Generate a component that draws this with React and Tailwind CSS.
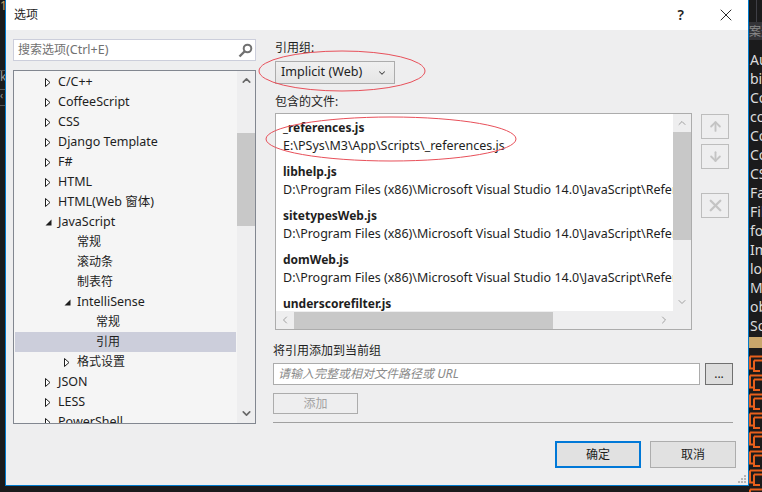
import { ChevronUp, ChevronDown, ChevronLeft, ChevronRight, ArrowUp, ArrowDown, X } from "lucide-react";

const font = "font-['Noto_Sans','Noto_Sans_CJK_SC',sans-serif]";

const treeRows = [
  { label: "C/C++", depth: 0, arrow: "closed", latin: true },
  { label: "CoffeeScript", depth: 0, arrow: "closed", latin: true },
  { label: "CSS", depth: 0, arrow: "closed", latin: true },
  { label: "Django Template", depth: 0, arrow: "closed", latin: true },
  { label: "F#", depth: 0, arrow: "closed", latin: true },
  { label: "HTML", depth: 0, arrow: "closed", latin: true },
  { label: "HTML(Web 窗体)", depth: 0, arrow: "closed", latin: true },
  { label: "JavaScript", depth: 0, arrow: "open", latin: true },
  { label: "常规", depth: 1 },
  { label: "滚动条", depth: 1 },
  { label: "制表符", depth: 1 },
  { label: "IntelliSense", depth: 1, arrow: "open", latin: true },
  { label: "常规", depth: 2 },
  { label: "引用", depth: 2, selected: true },
  { label: "格式设置", depth: 1, arrow: "closed" },
  { label: "JSON", depth: 0, arrow: "closed", latin: true },
  { label: "LESS", depth: 0, arrow: "closed", latin: true },
  { label: "PowerShell", depth: 0, arrow: "closed", latin: true },
];

const files = [
  { name: "_references.js", path: "E:\\PSys\\M3\\App\\Scripts\\_references.js" },
  { name: "libhelp.js", path: "D:\\Program Files (x86)\\Microsoft Visual Studio 14.0\\JavaScript\\References\\libhelp.js" },
  { name: "sitetypesWeb.js", path: "D:\\Program Files (x86)\\Microsoft Visual Studio 14.0\\JavaScript\\References\\sitetypesWeb.js" },
  { name: "domWeb.js", path: "D:\\Program Files (x86)\\Microsoft Visual Studio 14.0\\JavaScript\\References\\domWeb.js" },
  { name: "underscorefilter.js", path: "" },
];

const backdrop = ["Au", "bi", "Co", "co", "Co", "Co", "CS", "Fa", "Fil", "fo", "Im", "lo", "M", "ob", "So"];

function Arrow({ type }) {
  if (type === "open") {
    return (
      <svg width="7" height="7" viewBox="0 0 7 7" className="shrink-0">
        <path d="M6.5 0.5V6.5H0.5Z" fill="#1e1e1e" />
      </svg>
    );
  }
  return (
    <svg width="6" height="9" viewBox="0 0 6 9" className="shrink-0">
      <path d="M0.5 0.5L5 4.5L0.5 8.5Z" fill="#fff" stroke="#1e1e1e" />
    </svg>
  );
}

function TreeRow({ row }) {
  const pad = ["pl-[30px]", "pl-[49px]", "pl-[68px]"][row.depth];
  return (
    <div className={`flex h-5 shrink-0 items-center ${pad} ${row.selected ? "bg-[#cccedb]" : ""}`}>
      <span className="flex w-[13px] shrink-0 items-center">{row.arrow && <Arrow type={row.arrow} />}</span>
      <span className={`whitespace-nowrap ${row.latin ? "text-[12.5px]" : ""}`}>{row.label}</span>
    </div>
  );
}

function SideButton({ children, className = "" }) {
  return (
    <div className={`flex h-[25px] w-[28px] items-center justify-center border border-[#bdbdbd] text-[#c4c4c4] ${className}`}>
      {children}
    </div>
  );
}

function LinkIcon() {
  return (
    <svg width="13" height="17" viewBox="0 0 13 17" className="shrink-0">
      <path d="M1 1.5H13M1 1.5V13.5H6M5 5.5H13M5 5.5V16H11" fill="none" stroke="#e8601c" strokeWidth="2" />
    </svg>
  );
}

function App() {
  return (
    <div className={`flex h-[492px] w-[762px] overflow-hidden bg-[#1b1b1c] text-xs text-[#1e1e1e] ${font}`}>
      {/* editor sliver on the left */}
      <div className="flex w-[5px] shrink-0 flex-col overflow-hidden text-[12px] leading-none text-[#9a9a9a]">
        <div className="h-[70px] text-[#c8a060]">1</div>
        <div className="h-[20px] border-y border-[#555]">k</div>
        <div className="h-[16px] border-b border-[#555] text-[10px]">‹</div>
      </div>

      {/* dialog */}
      <div className="flex h-[486px] w-[744px] shrink-0 flex-col border border-t-0 border-[#007acc] bg-[#eeeeef]">
        <div className="flex h-[30px] shrink-0 items-center bg-white pl-[8px]">
          <span className="text-[12px]">选项</span>
          <span className="ml-auto mr-[32px] text-[14px] font-semibold leading-none">?</span>
          <X size={20} strokeWidth={1} className="mr-[12px] text-black" />
        </div>

        <div className="relative flex min-h-0 flex-1 pl-[7px] pt-[9px]">
          {/* left column */}
          <div className="flex w-[243px] shrink-0 flex-col">
            <div className="flex h-[22px] items-center justify-between border border-[#cccedb] bg-white pl-[4px] pr-[2px] text-[#717171]">
              <span>搜索选项<span className="text-[12.5px]">(Ctrl+E)</span></span>
              <svg width="15" height="15" viewBox="0 0 15 15">
                <circle cx="9.5" cy="5.5" r="3.8" fill="none" stroke="#717171" strokeWidth="2" />
                <path d="M6.5 8.5L1.5 13.5" stroke="#717171" strokeWidth="2.4" />
              </svg>
            </div>
            <div className="mt-[9px] flex h-[354px] border border-[#828790] bg-[#f5f5f5]">
              <div className="flex min-w-0 flex-1 flex-col overflow-hidden pl-px pt-[1px]">
                {treeRows.map((row, i) => (
                  <TreeRow key={i} row={row} />
                ))}
              </div>
              <div className="ml-[1px] flex w-[18px] shrink-0 flex-col items-center bg-[#eeeeef] text-[#686868]">
                <ChevronUp size={13} strokeWidth={3} className="mt-[3px]" />
                <div className="mt-[46px] h-[93px] w-full bg-[#c8c8c8]" />
                <ChevronDown size={13} strokeWidth={3} className="mt-auto mb-[3px]" />
              </div>
            </div>
          </div>

          {/* right column */}
          <div className="ml-[17px] flex w-[463px] shrink-0 flex-col">
            <div className="ml-[2px] leading-[18px]">引用组:</div>
            <div className="ml-[2px] mt-[4px] flex h-[23px] w-[120px] items-center justify-between border border-[#acacac] bg-gradient-to-b from-[#f0f0f0] to-[#e5e5e5] pl-[5px] pr-[7px] text-[12.6px]">
              <span>Implicit (Web)</span>
              <ChevronDown size={10} strokeWidth={2.5} className="text-[#444]" />
            </div>
            <div className="ml-[2px] mt-[9px] leading-[18px]">包含的文件:</div>
            <div className="mt-[2px] flex">
              <div className="ml-[2px] flex h-[217px] w-[417px] shrink-0 flex-col border border-[#acacac] bg-white">
                <div className="flex min-h-0 flex-1">
                  <div className="min-w-0 flex-1 overflow-hidden pl-[7px] pt-[5px]">
                    {files.map((f) => (
                      <div key={f.name} className="h-[44px] whitespace-nowrap leading-[18px]">
                        <div className="font-bold">{f.name}</div>
                        <div className="text-[12.5px]">{f.path}</div>
                      </div>
                    ))}
                  </div>
                  <div className="flex w-[18px] shrink-0 flex-col items-center bg-[#eeeeef] text-[#a0a0a0]">
                    <ChevronUp size={12} strokeWidth={2} className="mt-[3px]" />
                    <div className="mt-[3px] h-[108px] w-full bg-[#c8c8c8]" />
                    <ChevronDown size={12} strokeWidth={2} className="mt-auto mb-[3px]" />
                  </div>
                </div>
                <div className="flex h-[18px] shrink-0 items-center bg-[#eeeeef] text-[#a0a0a0]">
                  <ChevronLeft size={12} strokeWidth={2} className="ml-[3px]" />
                  <div className="ml-[3px] h-[17px] w-[259px] bg-[#c8c8c8]" />
                  <ChevronRight size={12} strokeWidth={2} className="ml-auto mr-[21px]" />
                </div>
              </div>
              <div className="ml-[9px] mt-px flex flex-col">
                <SideButton><ArrowUp size={15} strokeWidth={3} /></SideButton>
                <SideButton className="mt-[5px]"><ArrowDown size={15} strokeWidth={3} /></SideButton>
                <SideButton className="mt-[24px]"><X size={19} strokeWidth={3} /></SideButton>
              </div>
            </div>
            <div className="mt-[12px] leading-[18px]">将引用添加到当前组</div>
            <div className="mt-[3px] flex">
              <div className="flex h-[22px] w-[427px] items-center border border-[#acacac] bg-white pl-[4px] italic text-[#8a8a8a]">
                <span>请输入完整或相对文件路径或 <span className="text-[12.5px]">URL</span></span>
              </div>
              <div className="ml-[5px] flex h-[22px] w-[28px] items-center justify-center border border-[#707070] bg-[#dddddd]">...</div>
            </div>
            <div className="mt-[8px] flex h-[21px] w-[85px] items-center justify-center border border-[#acacac] text-[#a2a2a2]">添加</div>
            <div className="mt-[8px] h-px w-[460px] bg-[#a0a0a0]" />
            <div className="mt-[18px] flex">
              <div className="ml-[282px] flex h-[27px] w-[86px] items-center justify-center border-2 border-[#0078d7] bg-[#e1e1e1]">确定</div>
              <div className="ml-[9px] flex h-[27px] w-[86px] items-center justify-center border border-[#adadad] bg-[#e1e1e1]">取消</div>
            </div>
          </div>

          {/* red hand drawn rings over the screenshot */}
          <svg className="pointer-events-none absolute left-[-6px] top-[-30px]" width="744" height="486" viewBox="0 0 744 486">
            <ellipse cx="342" cy="71" rx="83" ry="20" fill="none" stroke="#e8505a" />
            <ellipse cx="391" cy="139" rx="125" ry="22" fill="none" stroke="#e8505a" />
          </svg>

          {/* resize grip */}
          <svg className="absolute bottom-[1px] right-[1px]" width="9" height="9" viewBox="0 0 9 9" fill="#b5b5b5">
            <rect x="6" y="0" width="2" height="2" />
            <rect x="3" y="3" width="2" height="2" />
            <rect x="6" y="3" width="2" height="2" />
            <rect x="0" y="6" width="2" height="2" />
            <rect x="3" y="6" width="2" height="2" />
            <rect x="6" y="6" width="2" height="2" />
          </svg>
        </div>
      </div>

      {/* editor behind the dialog */}
      <div className="flex min-w-0 flex-1 flex-col overflow-hidden text-[14px] leading-[19px] text-[#dcdcdc]">
        <div className="h-[22px] shrink-0 pl-[7px]">
          <div className="h-full w-px bg-[#3f3f46]" />
        </div>
        <div className="flex h-[18px] shrink-0 items-center overflow-hidden whitespace-nowrap bg-[#333337] text-[12px] text-[#8a8a8a]">案选</div>
        <div className="flex flex-col pl-[1px] pt-[10px]">
          {backdrop.map((t, i) => (
            <div key={i}>{t}</div>
          ))}
        </div>
        <div className="mt-[2px] h-[11px] shrink-0 bg-[#c9a66b]" />
        <div className="flex flex-col gap-[2px] pt-[7px]">
          {[0, 1, 2, 3, 4, 5, 6, 7].map((i) => (
            <LinkIcon key={i} />
          ))}
        </div>
      </div>
    </div>
  );
}

export default App;
